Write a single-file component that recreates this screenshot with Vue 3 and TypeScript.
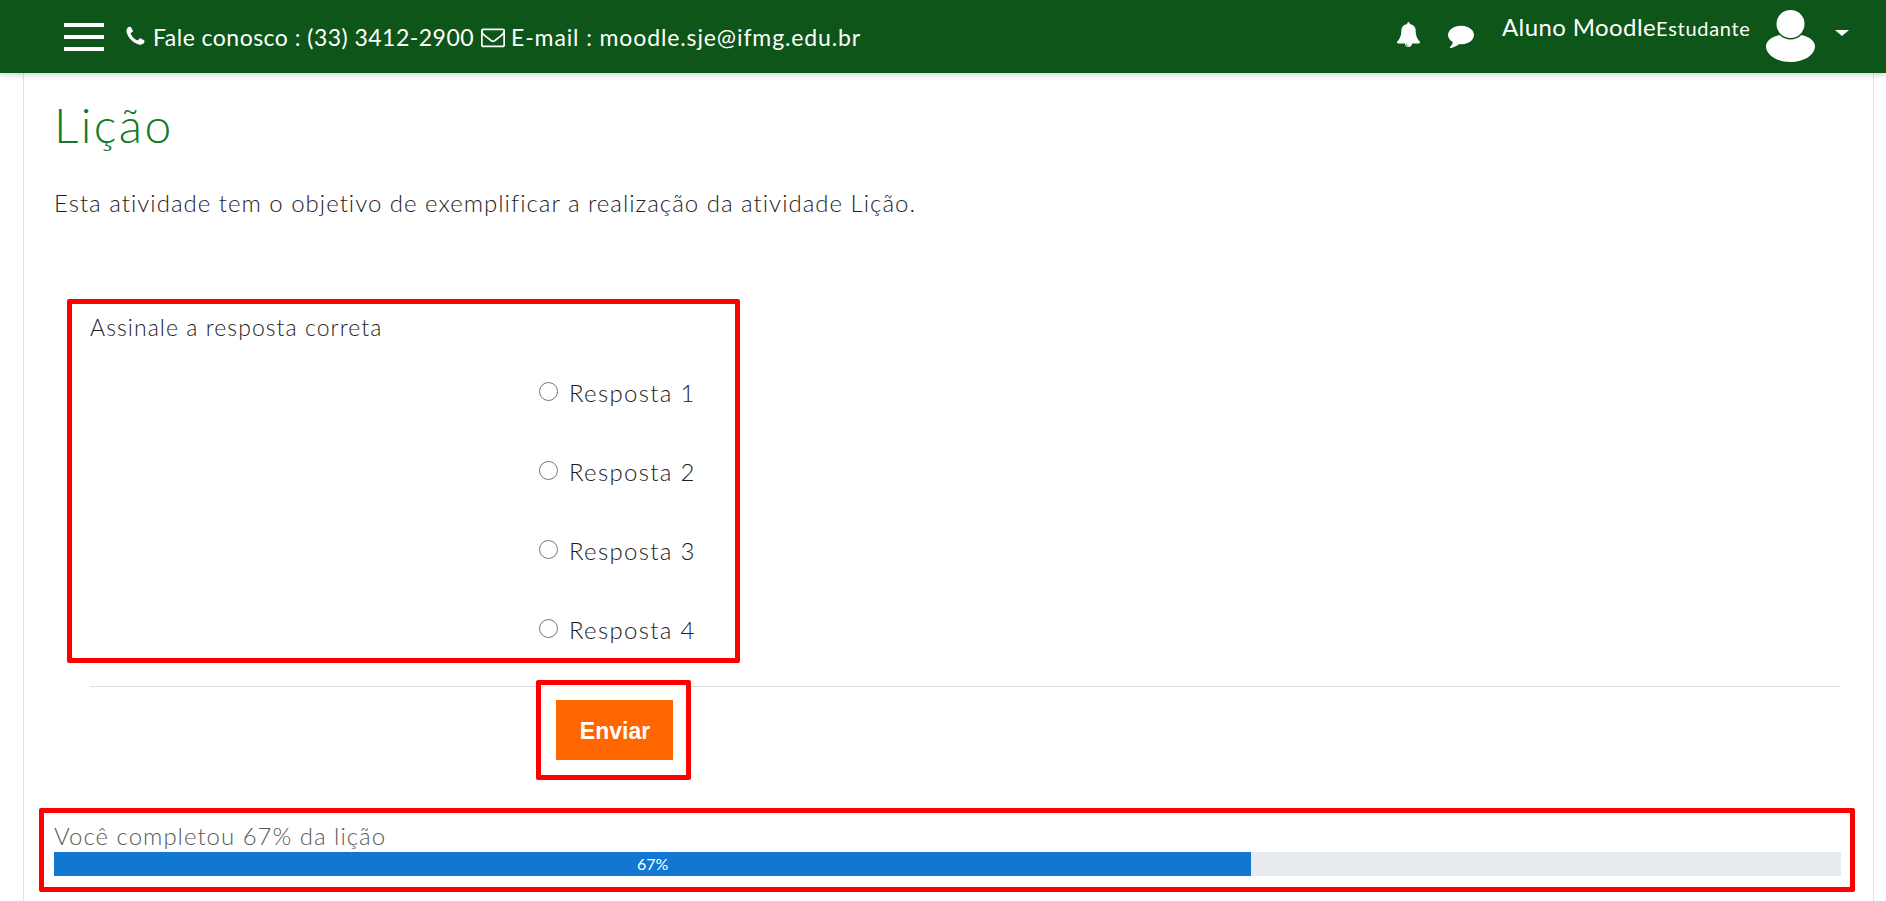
<script setup lang="ts">
const answers: string[] = ['Resposta 1', 'Resposta 2', 'Resposta 3', 'Resposta 4']
const progress = 67
</script>

<template>
  <div class="page">
    <header class="topbar">
      <button class="burger" type="button" aria-label="Menu"><i></i><i></i><i></i></button>
      <div class="contact">
        <svg class="ic-phone" viewBox="0 0 1792 1792"><path d="M1600 1240q0 27-10 70.5t-21 68.5q-21 50-122 106-94 51-186 51-27 0-53-3.5t-57.5-12.5-47-14.5-55.5-20.5-49-18q-98-35-175-83-127-79-264-216t-216-264q-48-77-83-175-3-9-18-49t-20.5-55.5-14.5-47-12.5-57.5-3.5-53q0-92 51-186 56-101 106-122 25-11 68.5-21t70.5-10q14 0 21 3 18 6 53 76 11 19 30 54t35 63.5 31 53.5q3 4 17.5 25t21.5 35.5 7 28.5q0 20-28.5 50t-62 55-62 53-28.5 46q0 9 5 22.5t8.5 20.5 14 24 11.5 19q76 137 174 235t235 174q2 1 19 11.5t24 14 20.5 8.5 22.5 5q18 0 46-28.5t53-62 55-62 50-28.5q14 0 28.5 7t35.5 21.5 25 17.5q25 15 53.5 31t63.5 35 54 30q70 35 76 53 3 7 3 21z"/></svg>
        <span class="phone-text">Fale conosco : (33) 3412-2900</span>
        <svg class="ic-mail" viewBox="0 0 1792 1792"><path d="M1664 1504v-768q-32 36-69 66-268 206-426 338-51 43-83 67t-86.5 48.5-102.5 24.5h-2q-48 0-102.5-24.5t-86.5-48.5-83-67q-158-132-426-338-37-30-69-66v768q0 13 9.5 22.5t22.5 9.5h1472q13 0 22.5-9.5t9.5-22.5zm0-1051v-24.5l-.5-13-3-12.5-5.5-9-9-7.5-14-2.5h-1472q-13 0-22.5 9.5t-9.5 22.5q0 168 147 284 193 152 401 317 6 5 35 29.5t46 37.5 44.5 31.5 50.5 27.5 43 9h2q20 0 43-9t50.5-27.5 44.5-31.5 46-37.5 35-29.5q208-165 401-317 54-43 100.5-115.5t46.5-131.5zm128-37v1088q0 66-47 113t-113 47h-1472q-66 0-113-47t-47-113v-1088q0-66 47-113t113-47h1472q66 0 113 47t47 113z"/></svg>
        <span class="mail-text">E-mail : moodle.sje@ifmg.edu.br</span>
      </div>
      <div class="user-area">
        <svg class="ic-bell" viewBox="0 0 1792 1792"><path d="M912 1696q0-16-16-16-59 0-101.5-42.5t-42.5-101.5q0-16-16-16t-16 16q0 73 51.5 124.5t124.5 51.5q16 0 16-16zm816-288q0 52-38 90t-90 38h-448q0 106-75 181t-181 75-181-75-75-181h-448q-52 0-90-38t-38-90q50-42 91-88t85-119.5 74.5-158.5 50-206 19.5-260q0-152 117-282.5t307-158.5q-8-19-8-39 0-40 28-68t68-28 68 28 28 68q0 20-8 39 190 28 307 158.5t117 282.5q0 139 19.5 260t50 206 74.5 158.5 85 119.5 91 88z"/></svg>
        <svg class="ic-chat" viewBox="0 0 1792 1792"><path d="M1792 896q0 174-120 321.5t-326 233-450 85.5q-70 0-145-8-198 175-460 242-49 14-114 22-17 2-30.5-9t-17.5-29v-1q-3-4-.5-12t2-10 4.5-9.5l6-9 7-8.5 8-9q7-8 31-34.5t34.5-38 31-39.5 32.5-51 27-59 26-76q-157-89-247.5-220t-90.5-281q0-130 71-248.5t191-204.5 286-136.5 348-50.5q244 0 450 85.5t326 233 120 321.5z"/></svg>
        <div class="user-name"><span class="name">Aluno Moodle</span><span class="role">Estudante</span></div>
        <svg class="avatar" viewBox="0 0 49 52"><circle cx="24.5" cy="14" r="14"/><path d="M13.600 25A15.500 15.500 0 0 0 35.400 25C43 26.500 49 31 49 36C49 45 38 52 24.500 52S0 45 0 36C0 31 6 26.500 13.600 25z"/></svg>
        <span class="caret"></span>
      </div>
    </header>

    <main class="card">
      <h2 class="title">Lição</h2>
      <p class="intro">Esta atividade tem o objetivo de exemplificar a realização da atividade Lição.</p>

      <form class="lesson" @submit.prevent>
        <fieldset class="question">
          <div class="prompt">Assinale a resposta correta</div>
          <label v-for="answer in answers" :key="answer" class="answer">
            <input type="radio" name="answer" />
            <span>{{ answer }}</span>
          </label>
        </fieldset>
        <hr class="rule" />
        <div class="submit-box">
          <button class="submit" type="submit">Enviar</button>
        </div>
      </form>

      <section class="progress-box">
        <div class="progress-label">Você completou {{ progress }}% da lição</div>
        <div class="track">
          <div class="fill" :style="{ width: progress + '%' }">{{ progress }}%</div>
        </div>
      </section>
    </main>
  </div>
</template>

<style>
html, body { margin: 0; height: 100%; overflow: hidden; background: #fff; }
</style>

<style scoped>
.page {
  height: 901px;
  font-family: Lato, "Liberation Sans", sans-serif;
  font-weight: 300;
  color: #1f2224;
  background: #fff;
  display: flex;
  flex-direction: column;
}
.topbar {
  flex: 0 0 73px;
  display: flex;
  align-items: center;
  background: #0e5519;
  color: #fff;
  padding-left: 64px;
  box-shadow: 0 2px 6px rgba(0, 0, 0, 0.18);
  position: relative;
  z-index: 1;
}
.burger {
  width: 40px;
  height: 28px;
  padding: 0;
  border: 0;
  background: none;
  display: flex;
  flex-direction: column;
  justify-content: space-between;
  flex: none;
}
.burger i { display: block; height: 4px; background: #fff; }
.contact {
  display: flex;
  align-items: center;
  margin-left: 20px;
  font-size: 23px;
  line-height: 36px;
  font-weight: 400;
}
.contact svg { fill: #fff; display: block; flex: none; }
.ic-phone { width: 23px; height: 23px; }
.phone-text { margin-left: 6px; width: 321px; white-space: nowrap; letter-spacing: 0.47px; }
.ic-mail { width: 24px; height: 24px; margin-left: 7px; }
.mail-text { margin-left: 6px; white-space: nowrap; letter-spacing: 0.88px; }
.user-area {
  margin-left: auto;
  display: flex;
  align-items: center;
  height: 100%;
}
.user-area svg { fill: #fff; display: block; flex: none; }
.ic-bell { width: 25px; height: 25px; margin-top: -4px; }
.ic-chat { width: 26px; height: 26px; margin-left: 27px; margin-top: -4px; }
.user-name {
  margin-left: 28px;
  width: 248px;
  align-self: flex-start;
  padding-top: 13px;
  line-height: 28px;
  white-space: nowrap;
  font-weight: 400;
}
.name { font-size: 24px; letter-spacing: 0.4px; }
.role { font-size: 20px; letter-spacing: 0.7px; }
.avatar { width: 49px; height: 52px; margin-left: 16px; margin-top: -1px; }
.caret {
  width: 0;
  height: 0;
  margin-left: 20px;
  margin-right: 37px;
  border-left: 7px solid transparent;
  border-right: 7px solid transparent;
  border-top: 6px solid #fff;
  margin-top: -7px;
}
.card {
  flex: 1;
  margin: 0 12px 0 23px;
  border-left: 1px solid #dee2e6;
  border-right: 1px solid #dee2e6;
  padding: 0 30px;
  min-height: 0;
}
.title {
  margin: 24px 0 0;
  font-size: 48px;
  line-height: 56px;
  font-weight: 300;
  letter-spacing: 2.4px;
  color: #107a28;
}
.intro {
  margin: 35px 0 0;
  font-size: 24px;
  line-height: 30px;
  letter-spacing: 1px;
}
.lesson { margin: 0; }
.question {
  box-sizing: border-box;
  margin: 81px 0 0 13px;
  width: 673px;
  height: 364px;
  padding: 8px 0 0 18px;
  border: 5px solid #f00;
  border-radius: 2px;
  min-width: 0;
  display: block;
}
.prompt {
  margin-bottom: 11px;
  font-size: 23px;
  line-height: 30px;
  letter-spacing: 1.05px;
}
.answer {
  display: flex;
  align-items: center;
  height: 79px;
  margin-left: 449px;
  font-size: 24px;
  color: #1c1c1c;
  letter-spacing: 1.3px;
}
.answer input {
  width: 19px;
  height: 19px;
  margin: 0 11px 0 0;
  flex: none;
  position: relative;
  top: -1px;
}
.rule {
  margin: 23px 0 0 36px;
  border: 0;
  border-top: 1px solid #dee2e6;
  width: 1751px;
}
.submit-box {
  box-sizing: border-box;
  position: relative;
  width: 155px;
  height: 100px;
  margin: -7px 0 0 482px;
  padding: 15px;
  border: 5px solid #f00;
  border-radius: 2px;
  background: #fff;
}
.submit {
  display: block;
  width: 117px;
  height: 60px;
  border: 0;
  padding: 2px 0 0 1px;
  background: #ff6600;
  color: #fff;
  font-family: "Liberation Sans", Arial, sans-serif;
  font-weight: 700;
  font-size: 23px;
}
.progress-box {
  box-sizing: border-box;
  width: 1816px;
  height: 84px;
  margin: 28px 0 0 -15px;
  padding: 7px 9px 0 10px;
  border: 5px solid #f00;
  border-radius: 2px;
}
.progress-label {
  font-size: 24px;
  line-height: 32px;
  color: #5a5a5a;
  letter-spacing: 1px;
}
.track {
  height: 24px;
  background: #e9ecef;
}
.fill {
  height: 100%;
  background: #1177d1;
  color: #fff;
  font-size: 16px;
  line-height: 24px;
  font-weight: 400;
  text-align: center;
}
</style>
